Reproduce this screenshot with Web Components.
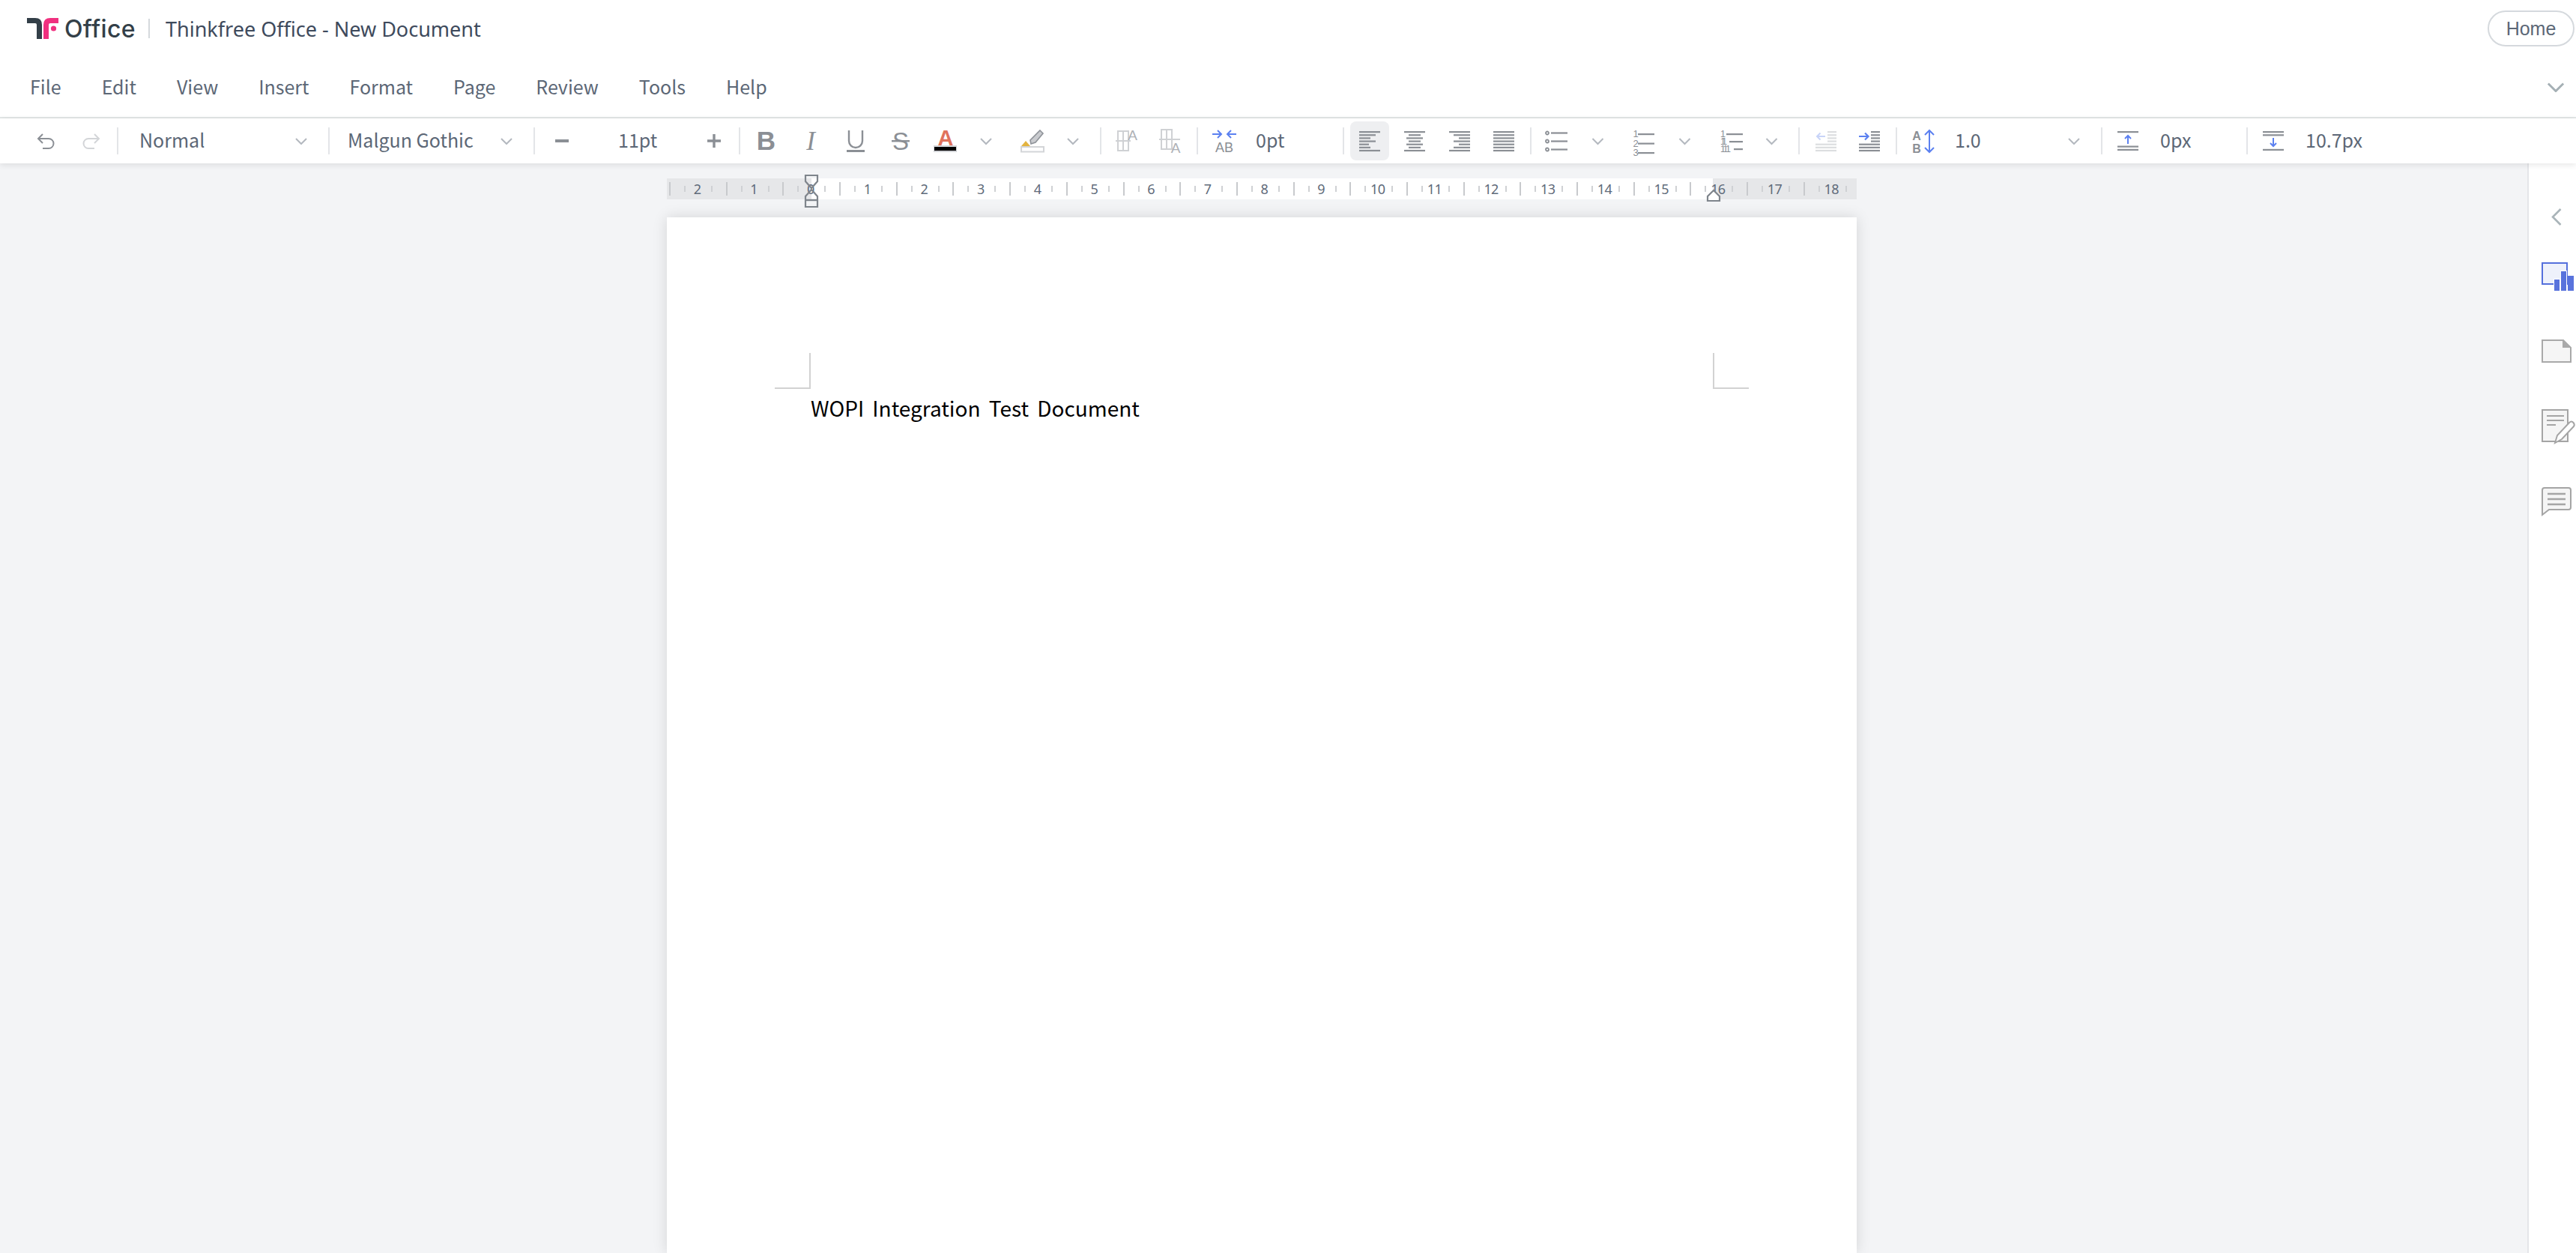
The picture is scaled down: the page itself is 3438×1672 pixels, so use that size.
<!DOCTYPE html>
<html lang="en"><head><meta charset="utf-8"><title>Thinkfree Office</title>
<style>
html,body{margin:0;height:100%;overflow:hidden;background:#f3f4f6}
body{font-family:"Noto Sans",sans-serif;color:#5c6776}
</style></head><body>
<tf-app>
  <tf-titlebar doc="Thinkfree Office - New Document"></tf-titlebar>
  <tf-menubar items="File,Edit,View,Insert,Format,Page,Review,Tools,Help"></tf-menubar>
  <tf-toolbar></tf-toolbar>
  <tf-workspace>
    <tf-canvas>
      <tf-ruler></tf-ruler>
      <tf-page>WOPI Integration Test Document</tf-page>
    </tf-canvas>
    <tf-sidepanel></tf-sidepanel>
  </tf-workspace>
</tf-app>
<script>
function def(name, css, html, init){
  customElements.define(name, class extends HTMLElement{
    constructor(){super();this.attachShadow({mode:'open'});}
    connectedCallback(){
      const body = typeof html==='function'?html(this):html;
      this.shadowRoot.innerHTML='<style>'+css+'</style>'+body;
      if(init)init(this);
    }
  });
}
const G='#8b8f95', L='#d3d5d8', BL='#5b80f0';
const UI='"Noto Sans CJK KR","Noto Sans",sans-serif';
const chev=(w=16,h=9,c='#b3b8bf')=>`<svg width="${w}" height="${h}" viewBox="0 0 16 9"><path d="M1 1l7 7 7-7" fill="none" stroke="${c}" stroke-width="2"/></svg>`;

def('tf-app',':host{display:flex;flex-direction:column;height:100vh;overflow:hidden}','<slot></slot>');

def('tf-titlebar',`
:host{display:flex;align-items:center;height:76px;background:#fff;padding-left:36px;padding-right:2px}
svg{display:block}
.name{font:500 32px Inter,sans-serif;color:#333f48;margin-left:8px;letter-spacing:.3px;width:94px;white-space:nowrap}
.div{width:2px;height:26px;background:#d5d9dd;margin:0 21px 0 18px}
.doc{font-size:27px;color:#3e4a5c;flex:1}
.home{box-sizing:border-box;width:116px;height:48px;border:2px solid #d5d9dd;border-radius:24px;display:flex;align-items:center;justify-content:center;font:25px "Liberation Sans",sans-serif;color:#5c6776}
`,el=>`<svg width="42" height="28" viewBox="36 24 42 28"><path fill="#333f48" d="M36 24H47Q56 24 56 33V52H49V33Q49 31 47 31H36Z"/><path fill="#f0307f" d="M78 24V31H67Q65 31 65 33V52H58V33Q58 24 67 24Z"/><circle cx="71.500" cy="38" r="3.600" fill="#f0307f"/></svg>
<span class="name">Office</span><span class="div"></span><span class="doc">${el.getAttribute('doc')}</span><span class="home">Home</span>`);

def('tf-menubar',`
:host{display:flex;align-items:center;height:80px;background:#fff;border-bottom:2px solid #e3e7e7;padding-left:40px;padding-right:15px;gap:54px;font:25px ${UI};color:#5c6776}
span{margin-bottom:3px}
.sp{flex:1;margin-left:-54px}
svg{display:block}
`,el=>el.getAttribute('items').split(',').map(t=>`<span>${t}</span>`).join('')+`<span class="sp"></span>`+chev(24,13,'#a5b0b5'));

def('tb-sep',':host{display:flex;justify-content:center;width:14px;flex:none}i{width:2px;height:36px;background:#e3e5e8}','<i></i>');
def('tb-cell',`:host{display:flex;align-items:center;justify-content:center;flex:none;height:60px;box-sizing:border-box}
:host([active]){height:52px;background:#eeeff1;border-radius:8px}
`,el=>{el.style.width=el.getAttribute('w')+'px';return '<slot></slot>'});
def('tb-select',`:host{display:flex;align-items:center;flex:none;height:60px;box-sizing:border-box;font:25px ${UI};color:#5c6776;padding-bottom:5px}
.t{flex:1;white-space:nowrap}svg{display:block;margin-top:5px}`,el=>{el.style.width=el.getAttribute('w')+'px';el.style.paddingLeft=el.getAttribute('pl')+'px';el.style.paddingRight=el.getAttribute('pr')+'px';return `<span class="t">${el.getAttribute('t')}</span>`+(el.hasAttribute('nochev')?'':chev(+(el.getAttribute('cw')||16),9))});

const alignIcon=(rows)=>`<svg width="28" height="27" viewBox="0 0 28 27">${rows.map((r,i)=>`<rect x="${r[0]}" y="${i*4.15}" width="${r[1]}" height="2.200" fill="${G}"/>`).join('')}</svg>`;

def('tf-toolbar',`
:host{display:flex;align-items:center;height:60px;background:#fff;padding-left:32px;box-shadow:0 2px 8px rgba(0,0,0,.1);position:relative;z-index:2;flex:none}
svg{display:block;overflow:visible}
text{font-family:"Liberation Sans",sans-serif}
`,()=>`
<tb-cell w="60"><svg width="24" height="21" viewBox="0 0 24 21"><path d="M7 1L1 7l6 6M1 7h14a6.500 6.500 0 0 1 0 13H7" fill="none" stroke="${G}" stroke-width="2"/></svg></tb-cell>
<tb-cell w="58"><svg width="24" height="21" viewBox="0 0 24 21"><path d="M17 1l6 6-6 6M23 7H9a6.500 6.500 0 0 0 0 13h8" fill="none" stroke="${L}" stroke-width="2"/></svg></tb-cell>
<tb-sep></tb-sep>
<tb-select w="268" pl="22" pr="22" t="Normal"></tb-select>
<tb-sep></tb-sep>
<tb-select w="260" pl="18" pr="22" t="Malgun Gothic"></tb-select>
<tb-sep></tb-sep>
<tb-cell w="60"><svg width="18" height="4"><rect width="18" height="4" fill="${G}"/></svg></tb-cell>
<tb-select w="142" pl="45" pr="0" nochev t="11pt"></tb-select>
<tb-cell w="58"><svg width="18" height="18" style="margin-left:4px"><path d="M0 9h18M9 0v18" stroke="${G}" stroke-width="3.400"/></svg></tb-cell>
<tb-sep></tb-sep>
<tb-cell w="58"><svg width="30" height="34" viewBox="0 0 30 34"><text x="14.500" y="29" text-anchor="middle" font-size="35" font-weight="700" fill="${G}">B</text></svg></tb-cell>
<tb-cell w="60"><svg width="30" height="34" viewBox="0 0 30 34"><text x="15" y="29" text-anchor="middle" font-size="35" font-style="italic" style="font-family:'Liberation Serif',serif" fill="${G}">I</text></svg></tb-cell>
<tb-cell w="60"><svg width="26" height="30" viewBox="0 0 26 30"><path d="M4 1v14a9 9 0 0 0 18 0V1" fill="none" stroke="${G}" stroke-width="2.400"/><rect x="1" y="27" width="24" height="3" fill="${G}"/></svg></tb-cell>
<tb-cell w="60"><svg width="26" height="30" viewBox="0 0 26 30"><text x="13" y="27" text-anchor="middle" font-size="33" fill="${G}">S</text><rect x="1" y="14" width="24" height="2.400" fill="${G}"/></svg></tb-cell>
<tb-cell w="60"><svg width="32" height="30" viewBox="0 0 32 30"><text x="16" y="21" text-anchor="middle" font-size="29" font-weight="700" fill="#e0735c">A</text><rect x="0" y="21" width="31" height="9" fill="#d3d5d8"/><rect x="1" y="23" width="29" height="5" fill="#000"/></svg></tb-cell>
<tb-cell w="48">${chev()}</tb-cell>
<tb-cell w="76"><svg width="32" height="30" viewBox="0 0 32 30"><path d="M26 1l4 4-10 12-6 2-1-5z" fill="#c9cbcf" stroke="#8f9399" stroke-width="1.600"/><path d="M1 22l6-7 6 7z" fill="#e3b440"/><rect x="1" y="23" width="30" height="6.500" fill="#fff" stroke="#d3d5d8" stroke-width="2"/></svg></tb-cell>
<tb-cell w="32">${chev()}</tb-cell>
<tb-cell w="14"></tb-cell>
<tb-sep></tb-sep>
<tb-cell w="56"><svg width="30" height="30" viewBox="0 0 30 30"><path d="M3 2h14v26H3zM10 2v26M0 15h20" fill="none" stroke="#cfd1d4" stroke-width="2"/><text x="22.500" y="14" text-anchor="middle" font-size="19" fill="#aeb1b6">A</text></svg></tb-cell>
<tb-cell w="59"><svg width="30" height="32" viewBox="0 0 30 32"><path d="M3 1h14v26H3zM10 1v26M0 14h28" fill="none" stroke="#cfd1d4" stroke-width="2"/><text x="22" y="32" text-anchor="middle" font-size="19" fill="#aeb1b6">A</text></svg></tb-cell>
<tb-sep></tb-sep>
<tb-cell w="57"><svg width="32" height="30" viewBox="0 0 32 30"><path d="M0 6h12M7 1l5 5-5 5M32 6H20M25 1l-5 5 5 5" fill="none" stroke="${BL}" stroke-width="2"/><text x="16" y="30" text-anchor="middle" font-size="18" fill="${G}">AB</text></svg></tb-cell>
<tb-select w="124" pl="14" pr="0" nochev t="0pt"></tb-select>
<tb-sep></tb-sep>
<tb-cell w="52" active style="margin-left:2px">${alignIcon([[0,28],[0,22],[0,15],[0,22],[0,13],[0,15],[0,28]])}</tb-cell>
<tb-cell w="60" style="margin-left:4px">${alignIcon([[0,28],[6,16],[3,22],[6,16],[3,22],[6,16],[0,28]])}</tb-cell>
<tb-cell w="60">${alignIcon([[0,28],[6,22],[13,15],[6,22],[13,15],[6,22],[0,28]])}</tb-cell>
<tb-cell w="58">${alignIcon([[0,28],[0,28],[0,28],[0,28],[0,28],[0,28],[0,28]])}</tb-cell>
<tb-sep></tb-sep>
<tb-cell w="54"><svg width="30" height="27" viewBox="0 0 30 27">${[2.500,13.500,24.500].map(y=>`<circle cx="3" cy="${y}" r="2" fill="none" stroke="${G}" stroke-width="1.800"/><rect x="8" y="${y-1.1}" width="22" height="2.200" fill="${G}"/>`).join('')}</svg></tb-cell>
<tb-cell w="56">${chev(17,9)}</tb-cell>
<tb-cell w="68"><svg width="28" height="29" viewBox="0 0 28 29">${['1','2','3'].map((t,i)=>`<text x="3" y="${9+i*12.500}" text-anchor="middle" font-size="13" fill="${G}">${t}</text><rect x="6" y="${4+i*12.500}" width="22" height="2.200" fill="${G}"/>`).join('')}</svg></tb-cell>
<tb-cell w="40">${chev(17,9)}</tb-cell>
<tb-cell w="86"><svg width="30" height="28" viewBox="0 0 30 28"><text x="0" y="9" font-size="12.500" fill="${G}" textLength="5">1</text><text x="0" y="19" font-size="12.500" fill="${G}" textLength="9">11</text><text x="0" y="29" font-size="12.500" fill="${G}" textLength="14">111</text><rect x="8" y="4" width="22" height="2.200" fill="${G}"/><rect x="12" y="14" width="18" height="2.200" fill="${G}"/><rect x="18" y="24" width="12" height="2.200" fill="${G}"/></svg></tb-cell>
<tb-cell w="20">${chev(17,9)}</tb-cell>
<tb-cell w="20"></tb-cell>
<tb-sep></tb-sep>
<tb-cell w="58"><svg width="28" height="27" viewBox="0 0 28 27">${[0,4.150,8.300,12.450].map(y=>`<rect x="16" y="${y}" width="12" height="2.200" fill="#dcdee0"/>`).join('')}${[16.600,20.750,24.900].map(y=>`<rect x="0" y="${y}" width="28" height="2.200" fill="#dcdee0"/>`).join('')}<path d="M13 7H2M6.500 2.500L2 7l4.500 4.500" fill="none" stroke="#c8d4f8" stroke-width="2"/></svg></tb-cell>
<tb-cell w="58"><svg width="28" height="27" viewBox="0 0 28 27">${[0,4.150,8.300,12.450].map(y=>`<rect x="16" y="${y}" width="12" height="2.200" fill="${G}"/>`).join('')}${[16.600,20.750,24.900].map(y=>`<rect x="0" y="${y}" width="28" height="2.200" fill="${G}"/>`).join('')}<path d="M0 7h12M8 2.500L12.500 7 8 11.500" fill="none" stroke="${BL}" stroke-width="2.200"/></svg></tb-cell>
<tb-sep></tb-sep>
<tb-cell w="58"><svg width="30" height="31" viewBox="0 0 30 31"><text x="6" y="14" text-anchor="middle" font-size="16" font-weight="700" fill="${G}">A</text><text x="6" y="31" text-anchor="middle" font-size="16" font-weight="700" fill="${G}">B</text><path d="M23 1v29M17 7l6-6 6 6M17 24l6 6 6-6" fill="none" stroke="${BL}" stroke-width="2"/></svg></tb-cell>
<tb-select w="202" pl="13" pr="22" t="1.0"></tb-select>
<tb-sep></tb-sep>
<tb-cell w="56"><svg width="28" height="26" viewBox="0 0 28 26"><rect width="28" height="2.200" fill="${G}"/><rect y="19.500" width="28" height="2.200" fill="${G}"/><rect y="23.800" width="28" height="2.200" fill="${G}"/><path d="M14 17V6M10 10l4-4 4 4" fill="none" stroke="${BL}" stroke-width="2"/></svg></tb-cell>
<tb-select w="124" pl="15" pr="0" nochev t="0px"></tb-select>
<tb-sep></tb-sep>
<tb-cell w="56"><svg width="28" height="26" viewBox="0 0 28 26"><rect width="28" height="2.200" fill="${G}"/><rect y="4.200" width="28" height="2.200" fill="${G}"/><rect y="23.800" width="28" height="2.200" fill="${G}"/><path d="M14 9v11M10 16l4 4 4-4" fill="none" stroke="${BL}" stroke-width="2"/></svg></tb-cell>
<tb-select w="200" pl="15" pr="0" nochev t="10.7px"></tb-select>
`);

def('tf-workspace',':host{display:flex;flex:1;min-height:0}','<slot></slot>');
def('tf-canvas',':host{flex:1;display:flex;flex-direction:column;align-items:center;padding:20px 5px 0 0;background:#f3f4f6;min-width:0;overflow:hidden;gap:24px}','<slot></slot>');

def('tf-ruler',`
:host{display:block;position:relative;width:1588px;height:28px;flex:none}
.bar{display:flex;height:28px;overflow:hidden;background:#fff;padding-left:3px;box-sizing:border-box;position:relative}
.gl,.gr{position:absolute;top:0;bottom:0;background:#e6e7e9}
.gl{left:0;width:193px}.gr{right:0;width:192px}
.cell{position:relative;flex:none;width:75.7px;display:grid;grid-template-columns:2px 18px 2px 34px 2px 1fr;align-items:center;height:28px}
.maj{height:18px;width:2px;background:#c8cacd}
.min{height:8px;width:2px;background:#cfd1d4}
.lab{text-align:center;font-size:18px;line-height:28px;color:#5f6b7a;letter-spacing:-.6px;white-space:nowrap;padding-right:3px}
svg{position:absolute;overflow:visible}
`,()=>{
  const labs=['2','1','0'];for(let i=1;i<=18;i++)labs.push(String(i));
  return `<div class="bar"><div class="gl"></div><div class="gr"></div>${labs.map(t=>`<div class="cell"><i class="maj"></i><span></span><i class="min"></i><span class="lab">${t}</span><i class="min"></i></div>`).join('')}</div>
<svg style="left:184px;top:-5px" width="18" height="44" viewBox="0 0 18 44"><path d="M1 1h16v8l-8 9-8-9zM9 20l8 9v14H1V29z" fill="none" stroke="#7f858c" stroke-width="2.200"/><path d="M1 34h16" stroke="#7f858c" stroke-width="2.400"/></svg>
<svg style="left:1388px;top:15px" width="18" height="16" viewBox="0 0 18 16"><path d="M9 1l8 8v6H1V9z" fill="#fff" stroke="#7f858c" stroke-width="2.200"/></svg>`});

def('tf-page',`
:host{display:block;width:1588px;flex:1;background:#fff;box-shadow:0 0 18px rgba(0,0,0,.13);box-sizing:border-box;padding:181px 144px 0}
.marks{display:flex;justify-content:space-between}
.c{width:48px;height:48px;box-sizing:border-box;border-bottom:2px solid #d2d2d2}
.l{border-right:2px solid #d2d2d2}.r{border-left:2px solid #d2d2d2}
.t{padding:4px 0 0 48px;font:28px/42px ${UI};color:#000;word-spacing:5px;white-space:nowrap}
`,()=>`<div class="marks"><div class="c l"></div><div class="c r"></div></div><div class="t"><slot></slot></div>`);

def('tf-sidepanel',`
:host{display:flex;flex-direction:column;flex:none;box-sizing:border-box;width:65px;background:#fff;border-left:2px solid #e4e6e9;padding:60px 0 0 17px;align-items:flex-start;position:relative;z-index:1}
svg{display:block;overflow:visible;flex:none}
`,()=>`
<svg style="margin-left:13px" width="14" height="23" viewBox="0 0 14 23"><path d="M12.500 1L2 11.500 12.500 22" fill="none" stroke="#a9b4b9" stroke-width="2.600"/></svg>
<svg style="margin-top:49px" width="44" height="38" viewBox="0 0 44 38"><rect x="1" y="1" width="33" height="28" fill="#eef1fb" stroke="#5570dc" stroke-width="2"/><path d="M16 38V22h9V11h9v28z" fill="#fff"/><rect x="17" y="23" width="7" height="15" fill="#5973dc"/><rect x="26" y="12" width="7" height="26" fill="#5973dc"/><rect x="35" y="18" width="8" height="20" fill="#5973dc"/></svg>
<svg style="margin-top:64px" width="40" height="32" viewBox="0 0 40 32"><path d="M1 2h28l10 10v19H1z" fill="#f5f5f5" stroke="#a9a9a9" stroke-width="2"/><path d="M28 1l11 11H28z" fill="#a9a9a9"/></svg>
<svg style="margin-top:62px" width="44" height="46" viewBox="0 0 44 46"><path d="M1 1h34v42H1z" fill="#f5f5f5" stroke="#a5a5a5" stroke-width="2"/><path d="M7 9h23M7 15h23M7 21h12" stroke="#a5a5a5" stroke-width="2.200"/><path d="M18 45l3-10 16-17q3-3 5.500 0t0 5.500L27 40z" fill="#fff" stroke="#a5a5a5" stroke-width="2"/></svg>
<svg style="margin-top:58px" width="40" height="38" viewBox="0 0 40 38"><path d="M4 1h32q3 0 3 3v23q0 3-3 3H10l-9 7V4q0-3 3-3z" fill="#f5f5f5" stroke="#a5a5a5" stroke-width="2"/><path d="M8 9h24M8 16h24M8 23h24" stroke="#a5a5a5" stroke-width="2.400"/></svg>
`);
</script>
</body></html>
